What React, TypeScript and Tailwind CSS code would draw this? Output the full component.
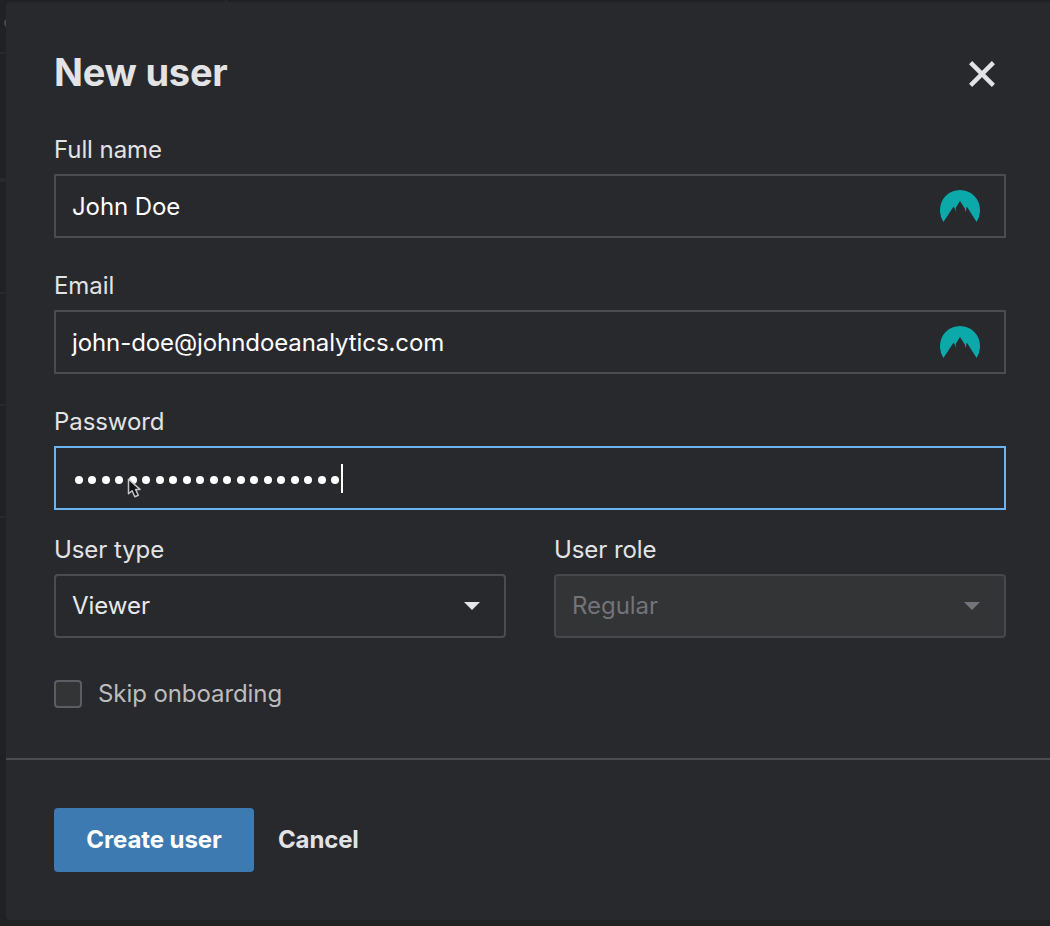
import React from "react";

function MountainIcon() {
  return (
    <svg width="40" height="32" viewBox="0 0 40 32" className="block shrink-0">
      <path
        d="M3.4 31.9A20 20 0 0 1 0 20a20 20 0 0 1 40 0 20 20 0 0 1-3.4 11.9L26.8 16.6l-1.2 5-.7-.6.2-2L20 11l-4.5 7.2 1.1 4-3-5.6Z"
        fill="#0ca9ab"
      />
    </svg>
  );
}

function Caret({ className }: { className: string }) {
  return (
    <svg width="16" height="8" viewBox="0 0 16 8" className={className}>
      <path d="M0 0h16L8 8Z" fill="currentColor" />
    </svg>
  );
}

function Label({ children }: { children: React.ReactNode }) {
  return <div className="h-[26px] text-[24px] leading-[28px] tracking-[-0.08px] text-[#e3e3e5]">{children}</div>;
}

function TextField({ label, value }: { label: string; value: string }) {
  return (
    <div className="mb-[34px]">
      <Label>{label}</Label>
      <div className="mt-3 flex h-16 items-center justify-between border-2 border-[#4b4c4f] pl-4 pr-6 text-[24px] text-white">
        <span className="pt-0.5 tracking-[-0.09px]">{value}</span>
        <MountainIcon />
      </div>
    </div>
  );
}

export default function App() {
  return (
    <div className="relative h-[926px] w-[1050px] overflow-hidden bg-[#202123] pl-1.5 pt-0.5 font-['Inter',sans-serif]">
      <div className="absolute left-0 top-[52px] h-0.5 w-1.5 bg-[#28292b]" />
      <div className="absolute left-0 top-[178px] h-1 w-1.5 bg-[#28292b]" />
      <div className="absolute left-0 top-[292px] h-0.5 w-1.5 bg-[#28292b]" />
      <div className="absolute left-0 top-[404px] h-0.5 w-1.5 bg-[#28292b]" />
      <div className="absolute left-0 top-[516px] h-0.5 w-1.5 bg-[#28292b]" />
      <div className="absolute left-[225px] top-0 h-0.5 w-0.5 bg-[#28292b]" />
      <div className="absolute left-1 top-[18px] h-2.5 w-2.5 rounded-full border-2 border-[#48494b]" />

      <div className="relative h-[918px] w-[1044px] rounded-l-[4px] bg-[#28292d]">
        <div className="h-[756px] pl-12 pr-11 pt-[46px]">
          <div className="flex h-[50px] items-center justify-between">
            <h1 className="-mt-0.5 text-[38px] font-bold leading-[48px] tracking-[-0.24px] text-[#e3e3e5]">New user</h1>
            <svg width="28" height="28" viewBox="0 0 28 28" className="mr-2.5 mt-0.5">
              <path d="M2.6 2.6 25.4 25.4M25.4 2.6 2.6 25.4" stroke="#e3e3e5" strokeWidth="4.4" />
            </svg>
          </div>

          <div className="mt-[38px]">
            <TextField label="Full name" value="John Doe" />
            <TextField label="Email" value="john-doe@johndoeanalytics.com" />

            <Label>Password</Label>
            <div className="relative mt-3 flex h-16 items-center border-2 border-[#6cb4f0] pl-[18.8px] text-white">
              <div className="flex gap-[5.5px] pt-1">
                {Array.from({ length: 20 }, (_, i) => (
                  <span key={i} className="h-2 w-2 rounded-full bg-white" />
                ))}
              </div>
              <span className="ml-[1.7px] h-[29px] w-0.5 bg-white" />
              <svg width="16" height="22" viewBox="0 0 16 22" className="absolute left-[70.5px] top-[29.5px]">
                <path
                  d="M1.5 1.2v14.6l3.6-3.1 2.7 6.1 3.5-1.5-2.7-5.9h4.4Z"
                  fill="#111214"
                  stroke="#c4c4c6"
                  strokeWidth="1.5"
                  strokeLinejoin="round"
                />
              </svg>
            </div>

            <div className="mt-[26px] grid grid-cols-2 gap-12">
              <div>
                <Label>User type</Label>
                <div className="mt-3 flex h-16 items-center justify-between rounded-[4px] border-2 border-[#4b4c4f] pl-4 pr-6 text-[24px] text-[#e9e9eb]">
                  <span className="tracking-[-0.05px]">Viewer</span>
                  <Caret className="text-[#e6e6e8]" />
                </div>
              </div>
              <div>
                <Label>User role</Label>
                <div className="mt-3 flex h-16 items-center justify-between rounded-[4px] border-2 border-[#47484b] bg-[#333435] pl-4 pr-6 text-[24px] text-[#72737a]">
                  <span className="tracking-[-0.05px]">Regular</span>
                  <Caret className="text-[#74757c]" />
                </div>
              </div>
            </div>

            <div className="mt-[42px] flex h-7 items-center gap-4">
              <span className="h-7 w-7 rounded-[4px] border-2 border-[#5c5d63] bg-[#333435]" />
              <span className="text-[24px] leading-7 tracking-[-0.08px] text-[#bcbcbf]">Skip onboarding</span>
            </div>
          </div>
        </div>

        <div className="flex gap-6 border-t-2 border-[#4b4c4f] pl-12 pt-12">
          <button className="h-16 w-[200px] rounded-[4px] bg-[#3d7ab2] text-[24px] font-bold tracking-[-0.1px] text-white">
            Create user
          </button>
          <button className="h-16 text-[24px] font-bold tracking-[-0.15px] text-[#e3e3e5]">Cancel</button>
        </div>
      </div>
    </div>
  );
}
